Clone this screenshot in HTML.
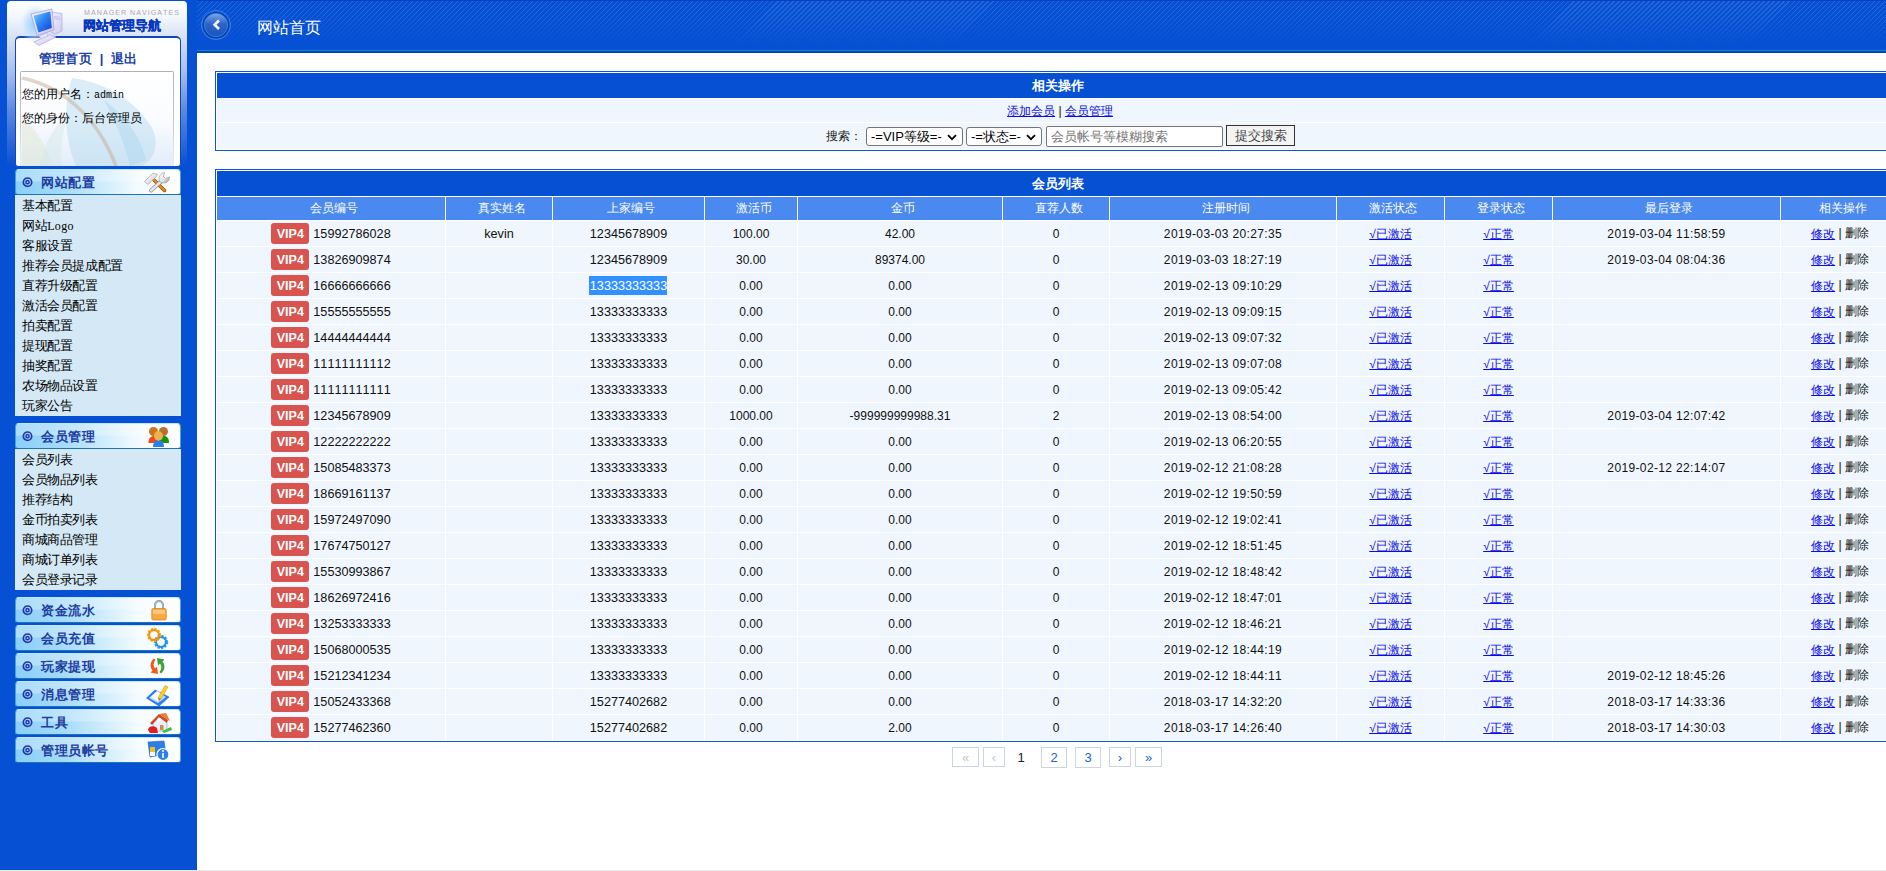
<!DOCTYPE html>
<html><head><meta charset="utf-8">
<style>
*{margin:0;padding:0;box-sizing:border-box}
html,body{width:1886px;height:871px;overflow:hidden;background:#fff;font-family:"Liberation Sans",sans-serif;font-size:12px;color:#000}
#side{position:absolute;left:0;top:0;width:197px;height:870px;background:#0550d3}
#main{position:absolute;left:197px;top:0;width:1689px;height:870px;background:#fff}
#hdr{position:absolute;left:0;top:0;width:1689px;height:53px;background:#0550d3;overflow:hidden}
#hdr .stripes{position:absolute;left:0;top:1px;width:100%;height:44px;background:repeating-linear-gradient(135deg,rgba(255,255,255,0.22) 0px,rgba(255,255,255,0.22) 1px,transparent 1px,transparent 3.5px);-webkit-mask-image:linear-gradient(to bottom,#000 0%,rgba(0,0,0,0.8) 40%,transparent 100%)}
#hdr .back{position:absolute;left:3px;top:9px}
#hdr .line{position:absolute;left:0;top:50px;width:100%;height:1px;background:#1b8aa8}
#hdr .line2{position:absolute;left:0;top:51px;width:100%;height:2px;background:#0340c8}
#hdr .title{position:absolute;left:60px;top:18px;color:#fff;font-size:16px;line-height:20px}
#bottomline{position:absolute;left:0;top:870px;width:1886px;height:1px;background:#e9e9e9}
table.t{position:absolute;left:215px;border:1px solid #0f55d8;border-spacing:1px;background:#fff;width:1685px;table-layout:fixed;border-collapse:separate}
table.t td{background:#eff6fe;text-align:center;padding:0;overflow:hidden;white-space:nowrap;color:#111;font-size:12px}
table.t td.h{background:#0550d3;color:#fff;font-weight:bold;font-size:13px;height:25px}
table.t td.sh{background:#4a89f0;color:#fff;font-size:12px;height:23px;padding-left:5px}
#t2 td{height:25px}
#t2 td.h{height:25px}
#t2 td.sh{height:23px}
td.r1{height:23px;padding-left:5px !important;padding-top:1px !important}
td.r2{height:26px}
a{color:#0b0be8;text-decoration:underline}
#t2 a{position:relative;top:1px}
.n{font-size:12.65px}
.vip{display:inline-block;background:#d9534f;color:#fff;font-weight:bold;font-size:12.5px;border-radius:3px;width:38px;height:21px;line-height:23px;text-align:center;vertical-align:middle;margin-right:4px}
span.sel{background:#3390ff;color:#fff;padding:3px 0 2px 1px;margin-left:-1px}
.search{position:relative;height:26px}
#pager span{position:absolute;top:747px;height:20px;line-height:19px;text-align:center;font-size:13px}
#pager .pg{border:1px solid #c9d6e2;color:#2060d0}
#pager .dis{color:#c8c8c8}
#pager .cur{color:#222;width:10px}
body{font-kerning:none;font-feature-settings:"kern" 0}
#side .panel{position:absolute;left:7px;top:1px;width:180px;height:165px;border-radius:4px 4px 0 0;background:linear-gradient(to bottom,#ffffff 0px,#f4f7fd 15px,#d8e3f6 35px,#a8c0ee 70px,#5a88e0 110px,#1e60d8 150px,#0550d3 165px)}
#side .pc{position:absolute;left:20px;top:2px}
#side .mn{position:absolute;left:84px;top:9px}
#side .navt{position:absolute;left:83px;top:18px;letter-spacing:0.8px;-webkit-text-stroke:0.4px #0838c0;font-size:13px;line-height:16px;font-weight:bold;color:#0838c0;letter-spacing:0px;text-shadow:0 0 2px #fff,0 0 1px #fff}
#side .inner{position:absolute;left:15px;top:36px;width:166px;height:130px;background:#fff;border-top:2px solid #1446b4;border-left:1px solid #1446b4;border-right:1px solid #1446b4;border-radius:5px 5px 3px 3px}
#side .links{position:absolute;left:23px;top:13px;font-size:13px;line-height:16px;color:#1b3fa5;font-weight:bold;letter-spacing:0.2px}
#side .links b{margin:0 4px}
#side .info{position:absolute;left:4px;top:33px;width:154px;height:95px;border-top:1px solid #b0b0b8;border-radius:2px 2px 0 0;background:linear-gradient(to bottom,#ffffff 0%,#fafcff 50%,#e2ecfa 100%);overflow:hidden}
#side .info:before,#side .info:after{content:'';position:absolute;top:0;width:1px;height:90px;background:linear-gradient(to bottom,#b0b0b8 0%,#c8c8d0 60%,rgba(220,225,240,0) 100%);z-index:2}
#side .info:before{left:0}#side .info:after{right:0}
#side .feather{position:absolute;left:0;top:0}
#side .u1{position:absolute;left:2px;top:15px;font-size:12px;line-height:14px;color:#000}
#side .u2{position:absolute;left:2px;top:39px;font-size:12px;line-height:14px;color:#000}
#side .mono{font-family:"Liberation Mono",monospace;font-size:10px}
#side .sec{position:absolute;left:15px;width:166px;height:26px;border-radius:4px 4px 3px 3px;border:1px solid #4aa0d8;border-top-color:#bfe6fb;border-bottom:1px solid #1a74b8;background:linear-gradient(to bottom,rgba(255,255,255,0.28) 0%,rgba(255,255,255,0.28) 46%,rgba(255,255,255,0) 50%),linear-gradient(to right,#8bcff8 0%,#a6dbfa 30%,#d2eefd 55%,#f4fbff 75%,#ffffff 100%)}
#side .sec .ic{position:absolute;left:6px;top:7px;width:11px;height:11px}
#side .sec .st{position:absolute;left:25px;top:5px;font-size:13px;letter-spacing:0.6px;line-height:16px;color:#1e3da0;font-weight:bold}
#side .sec .si{position:absolute}
#side .items{position:absolute;left:15px;width:166px;background:#d4e9f5;padding-top:0}
#side .items div{height:20px;line-height:22px;padding-left:7px;font-size:13px;letter-spacing:-0.4px;color:#000}
#side .lat{font-family:"Liberation Serif",serif;font-size:12px;letter-spacing:0.3px}
.search span{position:absolute;display:block;font-size:13px;line-height:17px}
.search .lbl{left:609px;top:5px;font-size:12px;color:#222}
.search .sel1,.search .sel2{top:4px;height:19px;border:1px solid #767676;border-radius:3px;background:#fff;text-align:left;padding-left:4px;color:#000;line-height:17px}
.search .sel1{left:649px;width:97px}
.search .sel2{left:749px;width:76px}
.search svg{position:absolute;right:5px;top:6px}
.search .inp{left:829px;top:3px;width:177px;height:21px;border:1px solid #767676;border-radius:2px;background:#fff;color:#757575;text-align:left;padding-left:4px;line-height:19px}
.search .btn{left:1009px;top:2px;width:69px;height:21px;border:1px solid #333;background:#f4f4f4;color:#444;line-height:19px;text-align:center}
#hdr .stripes{background:repeating-linear-gradient(135deg,rgba(150,190,255,0.24) 0px,rgba(150,190,255,0.24) 0.9px,transparent 0.9px,transparent 3.54px)}
#hdr .topl{position:absolute;left:0;top:0;width:100%;height:1px;background:#0440c0}

.vip + .n{position:relative;top:1px}

.d{letter-spacing:0.36px}

</style></head><body>
<div id="side">
 <div class="panel"></div>
 
 <svg class="mn" width="97" height="7" viewBox="0 0 97 7"><text x="0" y="6" font-family="Liberation Sans" font-size="7.2" fill="#a9a9a9" textLength="96" lengthAdjust="spacingAndGlyphs" style="letter-spacing:1px">MANAGER NAVIGATES</text></svg>
 <div class="navt">网站管理导航</div>
 <div class="inner">
  <div class="links">管理首页 <b>|</b> 退出</div>
  <div class="info">
   <svg class="feather" width="153" height="94" viewBox="0 0 153 94">
    <path d="M52 6 C82 10 114 26 132 56 C140 72 134 88 122 94 L56 94 C46 70 42 40 52 6 Z" fill="#b8dcef" opacity="0.5"/>
    <path d="M84 28 C100 40 120 60 126 88 L110 94 C104 70 96 50 84 28 Z" fill="#9fd0ec" opacity="0.35"/>
    <path d="M2 44 C16 58 28 76 32 94 L2 94 Z" fill="#dfe8cf" opacity="0.5"/>
    <path d="M20 94 C24 72 34 54 48 42 C42 62 40 80 42 94 Z" fill="#d2e6e8" opacity="0.45"/>
    <path d="M2 6 C40 14 76 42 96 94" stroke="#c8ac94" stroke-width="3.6" fill="none" opacity="0.5"/>
   </svg>
   <div class="u1">您的用户名：<span class="mono">admin</span></div>
   <div class="u2">您的身份：后台管理员</div>
  </div>
 </div>

<svg class="pc" width="50" height="46" viewBox="0 0 50 46">
  <defs>
   <radialGradient id="glow" cx="0.5" cy="0.5" r="0.5"><stop offset="0" stop-color="#8cc8ff" stop-opacity="0.95"/><stop offset="0.6" stop-color="#b8dcff" stop-opacity="0.6"/><stop offset="1" stop-color="#dcecff" stop-opacity="0"/></radialGradient>
   <linearGradient id="scr" x1="0" y1="0" x2="1" y2="1"><stop offset="0" stop-color="#7fd4ff"/><stop offset="0.45" stop-color="#2f86f4"/><stop offset="1" stop-color="#1040d8"/></linearGradient>
   <linearGradient id="frm" x1="0" y1="0" x2="1" y2="1"><stop offset="0" stop-color="#f4f2ff"/><stop offset="1" stop-color="#cfcaf0"/></linearGradient>
  </defs>
  <ellipse cx="15" cy="22" rx="15" ry="20" fill="url(#glow)"/>
  <path d="M31 10 L42 11.5 L42 29 L35 32 L31 30 Z" fill="url(#frm)" stroke="#aea8dc" stroke-width="0.7"/>
  <path d="M34.5 14 L39.5 15 L39.5 18 L34.5 17 Z" fill="#d4d2f2" stroke="#b8b4e4" stroke-width="0.4"/>
  <path d="M14 40 L30 32.5 L36 35 L19 43.5 Z" fill="url(#frm)" stroke="#aea8dc" stroke-width="0.7"/>
  <path d="M19 34 L27 31 L28 34 L21 37 Z" fill="#e6e4f8" stroke="#b0aadc" stroke-width="0.5"/>
  <path d="M11 12 L32 7 L34 28 L17 33.5 Z" fill="url(#frm)" stroke="#a8a2d8" stroke-width="0.8"/>
  <path d="M13.6 13.8 L30.3 9.6 L31.8 26 L18.4 30.4 Z" fill="url(#scr)"/>
 </svg>
 <div class="sec" style="top:169px"><svg class="ic" width="11" height="11" viewBox="0 0 11 11"><circle cx="5.5" cy="5.2" r="4.2" fill="none" stroke="#2238a8" stroke-width="1.7"/><circle cx="5.5" cy="5.2" r="1.6" fill="none" stroke="#2238a8" stroke-width="1.5"/></svg><span class="st">网站配置</span>
  <svg class="si" style="left:128px;top:2px" width="27" height="22" viewBox="0 0 27 22">
   <defs><linearGradient id="met" x1="0" y1="0" x2="1" y2="1"><stop offset="0" stop-color="#ffffff"/><stop offset="0.6" stop-color="#e0e0e0"/><stop offset="1" stop-color="#8a8a8a"/></linearGradient></defs>
   <path d="M8.5 6.5 L20.5 18.5" stroke="#8a4206" stroke-width="3.4" stroke-linecap="round"/>
   <path d="M8.5 6.5 L20.5 18.5" stroke="#f0900e" stroke-width="2" stroke-linecap="round"/>
   <path d="M0.5 9.5 L9 1 L13.5 2.5 L12 5 L4 12.5 Z" fill="url(#met)" stroke="#9a9a9a" stroke-width="0.6"/>
   <path d="M7 18.5 L17 9.5" stroke="#8c8c8c" stroke-width="3.8" stroke-linecap="round"/>
   <path d="M7 18.5 L17 9.5" stroke="#e8e8e8" stroke-width="2.4" stroke-linecap="round"/>
   <path d="M15.5 9.5 C14 5 16.5 1 20.5 0.5 L19.5 4.5 L21.5 6.5 L25.5 5 C25.5 9 22.5 11.5 18.5 11 Z" fill="url(#met)" stroke="#8e8e8e" stroke-width="0.6"/>
  </svg>
 </div>
 <div class="items" style="top:195px;height:221px">
  <div>基本配置</div><div>网站<span class="lat">Logo</span></div><div>客服设置</div><div>推荐会员提成配置</div><div>直荐升级配置</div><div>激活会员配置</div><div>拍卖配置</div><div>提现配置</div><div>抽奖配置</div><div>农场物品设置</div><div>玩家公告</div>
 </div>

 <div class="sec" style="top:423px"><svg class="ic" width="11" height="11" viewBox="0 0 11 11"><circle cx="5.5" cy="5.2" r="4.2" fill="none" stroke="#2238a8" stroke-width="1.7"/><circle cx="5.5" cy="5.2" r="1.6" fill="none" stroke="#2238a8" stroke-width="1.5"/></svg><span class="st">会员管理</span>
  <svg class="si" style="left:132px;top:2px" width="22" height="22" viewBox="0 0 22 22">
   <circle cx="5.5" cy="5.5" r="4.5" fill="#c8781e"/><circle cx="15.5" cy="5.5" r="4.5" fill="#b87030"/>
   <path d="M0.5 17 C0.5 12 3 10 6 10 C9 10 10 13 10 17 Z" fill="#f04818"/>
   <path d="M11 17 C11 12 13 10 16 10 C19 10 21 12 21 17 Z" fill="#14960e"/>
   <circle cx="10.5" cy="10" r="4.5" fill="#f0b050"/><path d="M6 8 C7 4 13 4 15 8 L14 6.5 C12 5 9 5 7 6.5Z" fill="#f0c000"/>
   <path d="M5 21 C5 16 7.5 14.5 10.5 14.5 C13.5 14.5 16 16 16 21 Z" fill="#2a7ff0"/>
  </svg>
 </div>
 <div class="items" style="top:449px;height:141px">
  <div>会员列表</div><div>会员物品列表</div><div>推荐结构</div><div>金币拍卖列表</div><div>商城商品管理</div><div>商城订单列表</div><div>会员登录记录</div>
 </div>

 <div class="sec" style="top:597px"><svg class="ic" width="11" height="11" viewBox="0 0 11 11"><circle cx="5.5" cy="5.2" r="4.2" fill="none" stroke="#2238a8" stroke-width="1.7"/><circle cx="5.5" cy="5.2" r="1.6" fill="none" stroke="#2238a8" stroke-width="1.5"/></svg><span class="st">资金流水</span>
  <svg class="si" style="left:135px;top:2px" width="16" height="21" viewBox="0 0 16 21">
   <path d="M4 9 L4 5.5 C4 2.5 6 1 8 1 C10 1 12 2.5 12 5.5 L12 9" fill="none" stroke="#6a8a98" stroke-width="2"/>
   <path d="M4 9 L4 5.5 C4 2.5 6 1 8 1 C10 1 12 2.5 12 5.5 L12 9" fill="none" stroke="#cfe4ec" stroke-width="0.8"/>
   <rect x="0.8" y="8.5" width="14.4" height="11.5" rx="1.5" fill="#f7a840" stroke="#e08420" stroke-width="0.8"/>
   <rect x="2" y="10" width="12" height="4" fill="#ffd090" opacity="0.8"/>
  </svg>
 </div>
 <div class="sec" style="top:625px"><svg class="ic" width="11" height="11" viewBox="0 0 11 11"><circle cx="5.5" cy="5.2" r="4.2" fill="none" stroke="#2238a8" stroke-width="1.7"/><circle cx="5.5" cy="5.2" r="1.6" fill="none" stroke="#2238a8" stroke-width="1.5"/></svg><span class="st">会员充值</span>
  <svg class="si" style="left:131px;top:2px" width="22" height="22" viewBox="0 0 22 22">
   <circle cx="14" cy="14" r="5.5" fill="none" stroke="#28a8f8" stroke-width="3.4" stroke-dasharray="2 1.2"/>
   <circle cx="14" cy="14" r="5" fill="none" stroke="#1e90f0" stroke-width="2"/>
   <circle cx="7" cy="7" r="5.5" fill="none" stroke="#f8b010" stroke-width="3.4" stroke-dasharray="2 1.2"/>
   <circle cx="7" cy="7" r="5" fill="none" stroke="#f09010" stroke-width="2"/>
  </svg>
 </div>
 <div class="sec" style="top:653px"><svg class="ic" width="11" height="11" viewBox="0 0 11 11"><circle cx="5.5" cy="5.2" r="4.2" fill="none" stroke="#2238a8" stroke-width="1.7"/><circle cx="5.5" cy="5.2" r="1.6" fill="none" stroke="#2238a8" stroke-width="1.5"/></svg><span class="st">玩家提现</span>
  <svg class="si" style="left:133px;top:3px" width="17" height="18" viewBox="0 0 17 18">
   <path d="M5 1.5 C1 4.5 0.5 10 3.5 13.5 L1.5 15.5 L9 17 L8 9.5 L6 11.5 C4 9 4 6 6.5 3 Z" fill="#f05a1a"/>
   <path d="M12 16.5 C16 13.5 16.5 8 13.5 4.5 L15.5 2.5 L8 1 L9 8.5 L11 6.5 C13 9 13 12 10.5 15 Z" fill="#3aa232"/>
  </svg>
 </div>
 <div class="sec" style="top:681px"><svg class="ic" width="11" height="11" viewBox="0 0 11 11"><circle cx="5.5" cy="5.2" r="4.2" fill="none" stroke="#2238a8" stroke-width="1.7"/><circle cx="5.5" cy="5.2" r="1.6" fill="none" stroke="#2238a8" stroke-width="1.5"/></svg><span class="st">消息管理</span>
  <svg class="si" style="left:130px;top:2px" width="24" height="22" viewBox="0 0 24 22">
   <path d="M0.5 14 L9 6 L23 13 L13 22 Z" fill="#2a80f0" stroke="#1860d0" stroke-width="0.6"/>
   <path d="M3 14 L10 8 L20 13 L12 19 Z" fill="#bfe0ff"/>
   <path d="M5 13 L11 7 L18 11 L12 17 Z" fill="#ffffff"/>
   <path d="M12 14 L19 1.5 L22 3 L15 15 Z" fill="#f8d020" stroke="#c89010" stroke-width="0.5"/>
   <path d="M12 14 L13 17 L15 15 Z" fill="#b07030"/>
  </svg>
 </div>
 <div class="sec" style="top:709px"><svg class="ic" width="11" height="11" viewBox="0 0 11 11"><circle cx="5.5" cy="5.2" r="4.2" fill="none" stroke="#2238a8" stroke-width="1.7"/><circle cx="5.5" cy="5.2" r="1.6" fill="none" stroke="#2238a8" stroke-width="1.5"/></svg><span class="st">工具</span>
  <svg class="si" style="left:132px;top:1px" width="24" height="23" viewBox="0 0 24 23">
   <path d="M5 12 L5 20 L19 20 L19 12 L12 6 Z" fill="#e8f0ff" stroke="#8aa0c8" stroke-width="0.6"/>
   <path d="M2 12 L11 3 L20 9 L19 12 L11 6 L4 14 Z" fill="#d04818"/>
   <path d="M11 3 L18 2 L22 10 L20 9 Z" fill="#f07838"/>
   <circle cx="11" cy="9" r="1.8" fill="#fff"/>
   <rect x="12" y="14" width="3.5" height="5" fill="#c89040"/>
   <path d="M14 20 L23 16 L24 19 L16 22 Z" fill="#40c040"/>
   <path d="M0 19 C0 15 6 14 9 17 L10 22 L2 22 Z" fill="#e02020"/>
  </svg>
 </div>
 <div class="sec" style="top:737px"><svg class="ic" width="11" height="11" viewBox="0 0 11 11"><circle cx="5.5" cy="5.2" r="4.2" fill="none" stroke="#2238a8" stroke-width="1.7"/><circle cx="5.5" cy="5.2" r="1.6" fill="none" stroke="#2238a8" stroke-width="1.5"/></svg><span class="st">管理员帐号</span>
  <svg class="si" style="left:131px;top:2px" width="23" height="21" viewBox="0 0 23 21">
   <path d="M1 2 L17 1 L19 14 L3 17 Z" fill="#2d7fe8" stroke="#1a5cc8" stroke-width="0.6"/>
   <rect x="3" y="7" width="5" height="5" fill="#f0c020"/>
   <rect x="3" y="12" width="5" height="4" fill="#f8f8f8"/>
   <circle cx="16" cy="14.5" r="6" fill="#2a80f0" stroke="#fff" stroke-width="1.2"/>
   <rect x="15.2" y="13" width="1.6" height="5" fill="#fff"/><circle cx="16" cy="11" r="1" fill="#fff"/>
  </svg>
 </div>
</div>

<div id="main">
  <div id="hdr"><div class="stripes"></div><div class="topl"></div>
  <svg class="back" width="32" height="32" viewBox="0 0 32 32"><defs><linearGradient id="bg1" x1="0" y1="0" x2="0" y2="1"><stop offset="0" stop-color="#7fa6e8"/><stop offset="0.45" stop-color="#2e63c9"/><stop offset="1" stop-color="#1a52c0"/></linearGradient></defs>
  <circle cx="16" cy="16" r="14.5" fill="none" stroke="#5d8ae0" stroke-width="1" opacity="0.8"/>
  <circle cx="16" cy="16" r="13" fill="#0d3ba8"/>
  <circle cx="16" cy="16" r="11.6" fill="url(#bg1)" stroke="#1aa0e0" stroke-width="0.8"/>
  <path d="M19 11.5 L14.6 15.8 L19 20" fill="none" stroke="#fff" stroke-width="2.6" stroke-linejoin="miter"/>
  </svg>
  <div class="line"></div><div class="line2"></div><div class="title">网站首页</div></div>
</div>
<table class="t" id="t1" style="top:71px">
<tr><td class="h">相关操作</td></tr>
<tr><td class="r1"><a>添加会员</a> | <a>会员管理</a></td></tr>
<tr><td class="r2"><div class="search"><span class="lbl">搜索：</span><span class="sel1">-=VIP等级=-<svg width="10" height="7" viewBox="0 0 10 7"><path d="M1 1.2 L5 5.2 L9 1.2" fill="none" stroke="#000" stroke-width="1.8"/></svg></span><span class="sel2">-=状态=-<svg width="10" height="7" viewBox="0 0 10 7"><path d="M1 1.2 L5 5.2 L9 1.2" fill="none" stroke="#000" stroke-width="1.8"/></svg></span><span class="inp">会员帐号等模糊搜索</span><span class="btn">提交搜索</span></div></td></tr>
</table>
<table class="t" id="t2" style="top:169px">
<colgroup><col style="width:228px"><col style="width:106px"><col style="width:151px"><col style="width:92px"><col style="width:204px"><col style="width:106px"><col style="width:226px"><col style="width:107px"><col style="width:107px"><col style="width:227px"><col style="width:118px"></colgroup>
<tr><td class="h" colspan="11">会员列表</td></tr>
<tr><td class="sh">会员编号</td><td class="sh">真实姓名</td><td class="sh">上家编号</td><td class="sh">激活币</td><td class="sh">金币</td><td class="sh">直荐人数</td><td class="sh">注册时间</td><td class="sh">激活状态</td><td class="sh">登录状态</td><td class="sh">最后登录</td><td class="sh">相关操作</td></tr>
<tr><td><span class="vip">VIP4</span><span class="n">15992786028</span></td><td><span class="n">kevin</span></td><td><span class="n">12345678909</span></td><td class="n">100.00</td><td class="n">42.00</td><td class="n">0</td><td class="n d">2019-03-03 20:27:35</td><td><a>√已激活</a></td><td><a>√正常</a></td><td class="n d">2019-03-04 11:58:59</td><td><a>修改</a> | 删除</td></tr>
<tr><td><span class="vip">VIP4</span><span class="n">13826909874</span></td><td><span class="n"></span></td><td><span class="n">12345678909</span></td><td class="n">30.00</td><td class="n">89374.00</td><td class="n">0</td><td class="n d">2019-03-03 18:27:19</td><td><a>√已激活</a></td><td><a>√正常</a></td><td class="n d">2019-03-04 08:04:36</td><td><a>修改</a> | 删除</td></tr>
<tr><td><span class="vip">VIP4</span><span class="n">16666666666</span></td><td><span class="n"></span></td><td><span class="n sel">13333333333</span></td><td class="n">0.00</td><td class="n">0.00</td><td class="n">0</td><td class="n d">2019-02-13 09:10:29</td><td><a>√已激活</a></td><td><a>√正常</a></td><td class="n d"></td><td><a>修改</a> | 删除</td></tr>
<tr><td><span class="vip">VIP4</span><span class="n">15555555555</span></td><td><span class="n"></span></td><td><span class="n">13333333333</span></td><td class="n">0.00</td><td class="n">0.00</td><td class="n">0</td><td class="n d">2019-02-13 09:09:15</td><td><a>√已激活</a></td><td><a>√正常</a></td><td class="n d"></td><td><a>修改</a> | 删除</td></tr>
<tr><td><span class="vip">VIP4</span><span class="n">14444444444</span></td><td><span class="n"></span></td><td><span class="n">13333333333</span></td><td class="n">0.00</td><td class="n">0.00</td><td class="n">0</td><td class="n d">2019-02-13 09:07:32</td><td><a>√已激活</a></td><td><a>√正常</a></td><td class="n d"></td><td><a>修改</a> | 删除</td></tr>
<tr><td><span class="vip">VIP4</span><span class="n">11111111112</span></td><td><span class="n"></span></td><td><span class="n">13333333333</span></td><td class="n">0.00</td><td class="n">0.00</td><td class="n">0</td><td class="n d">2019-02-13 09:07:08</td><td><a>√已激活</a></td><td><a>√正常</a></td><td class="n d"></td><td><a>修改</a> | 删除</td></tr>
<tr><td><span class="vip">VIP4</span><span class="n">11111111111</span></td><td><span class="n"></span></td><td><span class="n">13333333333</span></td><td class="n">0.00</td><td class="n">0.00</td><td class="n">0</td><td class="n d">2019-02-13 09:05:42</td><td><a>√已激活</a></td><td><a>√正常</a></td><td class="n d"></td><td><a>修改</a> | 删除</td></tr>
<tr><td><span class="vip">VIP4</span><span class="n">12345678909</span></td><td><span class="n"></span></td><td><span class="n">13333333333</span></td><td class="n">1000.00</td><td class="n">-999999999988.31</td><td class="n">2</td><td class="n d">2019-02-13 08:54:00</td><td><a>√已激活</a></td><td><a>√正常</a></td><td class="n d">2019-03-04 12:07:42</td><td><a>修改</a> | 删除</td></tr>
<tr><td><span class="vip">VIP4</span><span class="n">12222222222</span></td><td><span class="n"></span></td><td><span class="n">13333333333</span></td><td class="n">0.00</td><td class="n">0.00</td><td class="n">0</td><td class="n d">2019-02-13 06:20:55</td><td><a>√已激活</a></td><td><a>√正常</a></td><td class="n d"></td><td><a>修改</a> | 删除</td></tr>
<tr><td><span class="vip">VIP4</span><span class="n">15085483373</span></td><td><span class="n"></span></td><td><span class="n">13333333333</span></td><td class="n">0.00</td><td class="n">0.00</td><td class="n">0</td><td class="n d">2019-02-12 21:08:28</td><td><a>√已激活</a></td><td><a>√正常</a></td><td class="n d">2019-02-12 22:14:07</td><td><a>修改</a> | 删除</td></tr>
<tr><td><span class="vip">VIP4</span><span class="n">18669161137</span></td><td><span class="n"></span></td><td><span class="n">13333333333</span></td><td class="n">0.00</td><td class="n">0.00</td><td class="n">0</td><td class="n d">2019-02-12 19:50:59</td><td><a>√已激活</a></td><td><a>√正常</a></td><td class="n d"></td><td><a>修改</a> | 删除</td></tr>
<tr><td><span class="vip">VIP4</span><span class="n">15972497090</span></td><td><span class="n"></span></td><td><span class="n">13333333333</span></td><td class="n">0.00</td><td class="n">0.00</td><td class="n">0</td><td class="n d">2019-02-12 19:02:41</td><td><a>√已激活</a></td><td><a>√正常</a></td><td class="n d"></td><td><a>修改</a> | 删除</td></tr>
<tr><td><span class="vip">VIP4</span><span class="n">17674750127</span></td><td><span class="n"></span></td><td><span class="n">13333333333</span></td><td class="n">0.00</td><td class="n">0.00</td><td class="n">0</td><td class="n d">2019-02-12 18:51:45</td><td><a>√已激活</a></td><td><a>√正常</a></td><td class="n d"></td><td><a>修改</a> | 删除</td></tr>
<tr><td><span class="vip">VIP4</span><span class="n">15530993867</span></td><td><span class="n"></span></td><td><span class="n">13333333333</span></td><td class="n">0.00</td><td class="n">0.00</td><td class="n">0</td><td class="n d">2019-02-12 18:48:42</td><td><a>√已激活</a></td><td><a>√正常</a></td><td class="n d"></td><td><a>修改</a> | 删除</td></tr>
<tr><td><span class="vip">VIP4</span><span class="n">18626972416</span></td><td><span class="n"></span></td><td><span class="n">13333333333</span></td><td class="n">0.00</td><td class="n">0.00</td><td class="n">0</td><td class="n d">2019-02-12 18:47:01</td><td><a>√已激活</a></td><td><a>√正常</a></td><td class="n d"></td><td><a>修改</a> | 删除</td></tr>
<tr><td><span class="vip">VIP4</span><span class="n">13253333333</span></td><td><span class="n"></span></td><td><span class="n">13333333333</span></td><td class="n">0.00</td><td class="n">0.00</td><td class="n">0</td><td class="n d">2019-02-12 18:46:21</td><td><a>√已激活</a></td><td><a>√正常</a></td><td class="n d"></td><td><a>修改</a> | 删除</td></tr>
<tr><td><span class="vip">VIP4</span><span class="n">15068000535</span></td><td><span class="n"></span></td><td><span class="n">13333333333</span></td><td class="n">0.00</td><td class="n">0.00</td><td class="n">0</td><td class="n d">2019-02-12 18:44:19</td><td><a>√已激活</a></td><td><a>√正常</a></td><td class="n d"></td><td><a>修改</a> | 删除</td></tr>
<tr><td><span class="vip">VIP4</span><span class="n">15212341234</span></td><td><span class="n"></span></td><td><span class="n">13333333333</span></td><td class="n">0.00</td><td class="n">0.00</td><td class="n">0</td><td class="n d">2019-02-12 18:44:11</td><td><a>√已激活</a></td><td><a>√正常</a></td><td class="n d">2019-02-12 18:45:26</td><td><a>修改</a> | 删除</td></tr>
<tr><td><span class="vip">VIP4</span><span class="n">15052433368</span></td><td><span class="n"></span></td><td><span class="n">15277402682</span></td><td class="n">0.00</td><td class="n">0.00</td><td class="n">0</td><td class="n d">2018-03-17 14:32:20</td><td><a>√已激活</a></td><td><a>√正常</a></td><td class="n d">2018-03-17 14:33:36</td><td><a>修改</a> | 删除</td></tr>
<tr><td><span class="vip">VIP4</span><span class="n">15277462360</span></td><td><span class="n"></span></td><td><span class="n">15277402682</span></td><td class="n">0.00</td><td class="n">2.00</td><td class="n">0</td><td class="n d">2018-03-17 14:26:40</td><td><a>√已激活</a></td><td><a>√正常</a></td><td class="n d">2018-03-17 14:30:03</td><td><a>修改</a> | 删除</td></tr>
</table>
<div id="pager"><span class="pg dis" style="left:952px;width:27px">«</span><span class="pg dis" style="left:983px;width:22px">‹</span><span class="cur" style="left:1016px;top:748px">1</span><span class="pg" style="left:1041px;width:26px;height:21px">2</span><span class="pg" style="left:1075px;width:26px;height:21px">3</span><span class="pg" style="left:1109px;width:22px">›</span><span class="pg" style="left:1135px;width:27px">»</span></div>
<div id="bottomline"></div>
</body></html>
